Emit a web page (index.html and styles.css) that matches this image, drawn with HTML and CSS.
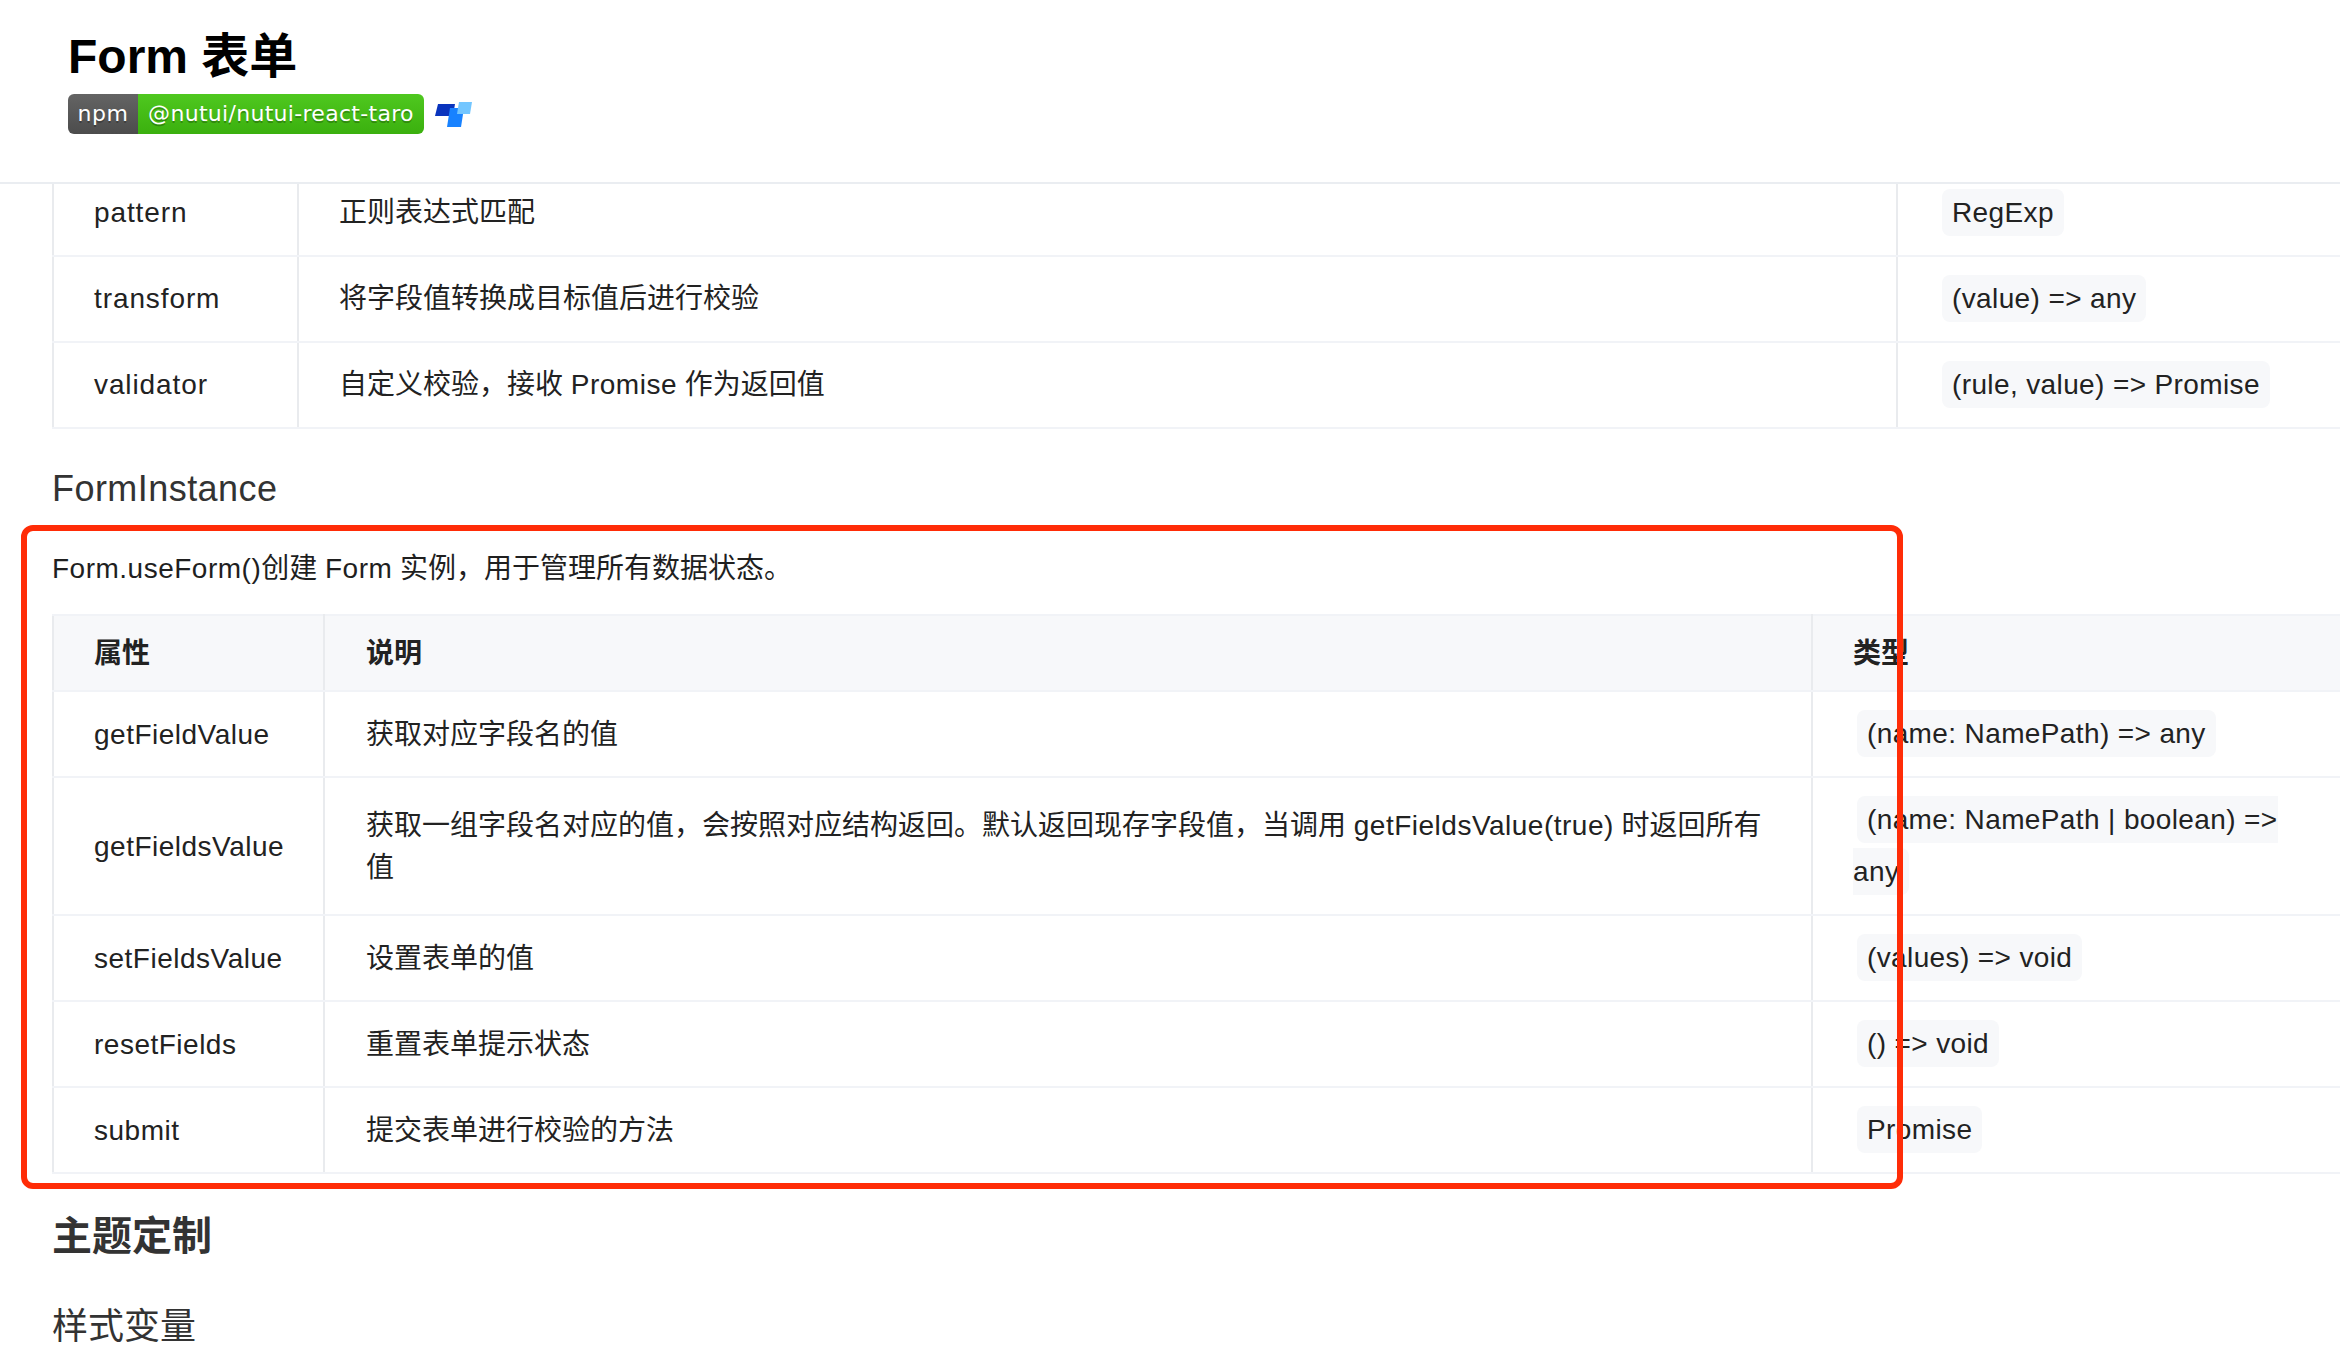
FILE: index.html
```html
<!DOCTYPE html>
<html lang="zh-CN">
<head>
<meta charset="utf-8">
<title>Form 表单</title>
<link rel="stylesheet" href="styles.css">
</head>
<body>
<header class="page-head">
  <h1 class="title">Form 表单</h1>
  <div class="badges">
    <span class="badge"><span class="badge-key">npm</span><span class="badge-val">@nutui/nutui-react-taro</span></span>
    <svg class="logo" width="37" height="25" viewBox="0 0 37 25" aria-hidden="true">
      <polygon fill="#0a34bd" points="3,2 20,2 18,14 0,14"/>
      <polygon fill="#1882ff" points="15,6 29,6 26,25 12,25"/>
      <polygon fill="#73c6ff" points="24,0 37,0 35,12 22,12"/>
    </svg>
  </div>
</header>
<main class="content">
  <table class="doc-table rules">
    <colgroup><col class="c1"><col class="c2"><col class="c3"></colgroup>
    <tbody>
      <tr><td class="name">pattern</td><td>正则表达式匹配</td><td class="type"><code>RegExp</code></td></tr>
      <tr><td class="name">transform</td><td>将字段值转换成目标值后进行校验</td><td class="type"><code>(value) =&gt; any</code></td></tr>
      <tr><td class="name">validator</td><td>自定义校验，接收 <span class="lat">Promise</span> 作为返回值</td><td class="type"><code>(rule, value) =&gt; Promise</code></td></tr>
    </tbody>
  </table>
  <h3 class="h-instance">FormInstance</h3>
  <p class="desc"><span class="lat">Form.useForm()</span>创建 <span class="lat">Form</span> 实例，用于管理所有数据状态。</p>
  <table class="doc-table instance">
    <colgroup><col class="c1"><col class="c2"><col class="c3"></colgroup>
    <thead><tr><th>属性</th><th>说明</th><th>类型</th></tr></thead>
    <tbody>
      <tr><td class="name">getFieldValue</td><td class="text">获取对应字段名的值</td><td class="type"><code>(name: NamePath) =&gt; any</code></td></tr>
      <tr><td class="name">getFieldsValue</td><td class="text">获取一组字段名对应的值，会按照对应结构返回。默认返回现存字段值，当调用 <span class="lat">getFieldsValue(true)</span> 时返回所有值</td><td class="type"><code>(name: NamePath | boolean) =&gt; any</code></td></tr>
      <tr><td class="name">setFieldsValue</td><td class="text">设置表单的值</td><td class="type"><code>(values) =&gt; void</code></td></tr>
      <tr><td class="name">resetFields</td><td class="text">重置表单提示状态</td><td class="type"><code>() =&gt; void</code></td></tr>
      <tr><td class="name">submit</td><td class="text">提交表单进行校验的方法</td><td class="type"><code>Promise</code></td></tr>
    </tbody>
  </table>
  <h2 class="h-theme">主题定制</h2>
  <h3 class="h-vars">样式变量</h3>
</main>
<div class="highlight"></div>
</body>
</html>
```
FILE: styles.css
```css
html, body {
  margin: 0;
  padding: 0;
  height: 1346px;
  overflow: hidden;
  background: #fff;
}
body {
  position: relative;
  color: #222;
  font-family: "Liberation Sans", "Noto Sans CJK SC", sans-serif;
  font-size: 28px;
  line-height: 42px;
}
.page-head {
  position: absolute;
  top: 0;
  left: 0;
  right: 0;
  height: 182px;
  padding-left: 68px;
  background: #fff;
  border-bottom: 2px solid #eaedf1;
  z-index: 2;
}
.title {
  margin: 27px 0 7px;
  font-size: 48px;
  line-height: 60px;
  font-weight: 700;
  color: #000;
}
.badges {
  display: flex;
  align-items: center;
  gap: 11px;
}
.badge {
  display: inline-flex;
  height: 40px;
  border-radius: 6px;
  overflow: hidden;
  color: #fff;
  font-family: "DejaVu Sans", sans-serif;
  font-size: 22px;
  line-height: 40px;
  text-shadow: 0 2px 0 rgba(0, 0, 0, .25);
}
.badge-key {
  width: 70px;
  text-align: center;
  letter-spacing: .5px;
  background: linear-gradient(#646464, #4c4c4c);
}
.badge-val {
  width: 286px;
  text-align: center;
  letter-spacing: .3px;
  background: linear-gradient(#4fc81f, #3bb00e);
}
.logo { display: block; margin-top: 1px; }
.content {
  padding: 169px 0 0 52px;
  width: 2310px;
}
.doc-table {
  border-collapse: collapse;
  table-layout: fixed;
  width: 2310px;
  border: 2px solid #eceef1;
}
.rules .c1 { width: 245px; }
.rules .c2 { width: 1599px; }
.instance .c1 { width: 271px; }
.instance .c2 { width: 1488px; }
.doc-table td, .doc-table th {
  padding: 16px 40px;
  text-align: left;
  vertical-align: middle;
  border-left: 2px solid #e9ebee;
  border-right: 2px solid #e9ebee;
  border-top: 2px solid #f1f3f7;
  border-bottom: 2px solid #f1f3f7;
}
.doc-table th {
  height: 43px;
  padding: 16px 40px 15px;
  font-weight: 700;
  background: #f7f8fa;
}
.doc-table th:nth-child(2) { padding-left: 41px; }
.name, .lat { letter-spacing: .5px; }
.rules .name { letter-spacing: .9px; }
.instance .name, .instance .text { padding-top: 17px; padding-bottom: 15px; }
.instance .text { padding-left: 41px; }
.type { line-height: 52px; }
code {
  margin: 0 4px;
  padding: 8px 10px;
  font-family: inherit;
  font-size: 28px;
  letter-spacing: .38px;
  background: #f7f8fa;
  border-radius: 8px;
}
.h-instance {
  margin: 33px 0 32px;
  font-size: 36px;
  line-height: 54px;
  font-weight: 400;
  letter-spacing: .45px;
  color: #333;
}
.desc {
  margin: 0 0 24px;
  color: #1f1f1f;
}
.h-theme {
  margin: 32px 0 34px;
  font-size: 40px;
  line-height: 60px;
  font-weight: 700;
  color: #333;
}
.h-vars {
  margin: 0;
  font-size: 36px;
  line-height: 54px;
  font-weight: 400;
  color: #333;
}
.highlight {
  position: absolute;
  left: 21px;
  top: 525px;
  width: 1882px;
  height: 664px;
  box-sizing: border-box;
  border: 6px solid #ff2c07;
  border-radius: 12px;
  z-index: 3;
}
```
